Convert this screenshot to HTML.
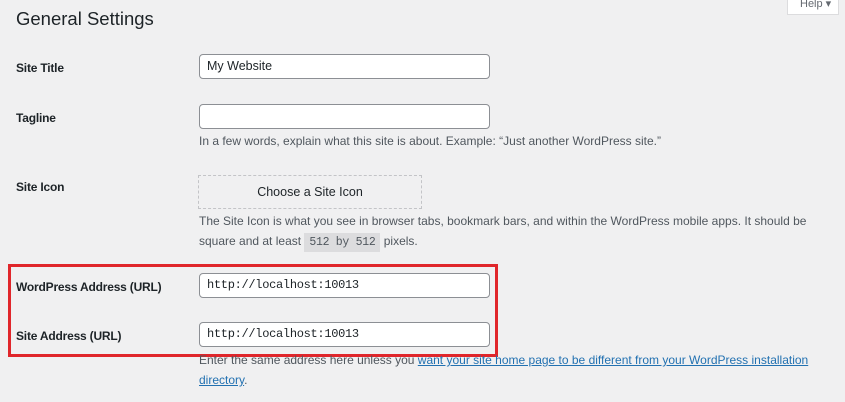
<!DOCTYPE html>
<html><head><style>
body{margin:0;width:845px;height:402px;background:#f0f0f1;font-family:"Liberation Sans",sans-serif;color:#1d2327;position:relative;overflow:hidden}
.a{position:absolute}
h1{position:absolute;left:16px;top:8px;margin:0;font-size:18.5px;font-weight:400}
.lbl{position:absolute;left:16px;font-size:12px;font-weight:bold;line-height:16px;letter-spacing:-0.2px}
.inp{position:absolute;left:199px;width:282px;height:23px;background:#fff;border:1px solid #8c8f94;border-radius:4px;font-size:12.5px;line-height:23px;padding-left:7px;box-sizing:content-box}
.mono{font-family:"Liberation Mono",monospace;font-size:12px;letter-spacing:-0.3px}
.d{position:absolute;left:199px;font-size:12px;color:#50575e;line-height:20px;width:640px}
code{background:#dcdcde;font-family:"Liberation Mono",monospace;font-size:11.5px;padding:3px 5px;letter-spacing:-0.3px}
a{color:#2271b1}
</style></head><body>
<div class="a" style="left:787px;top:-1px;width:52px;height:16px;background:#fff;border:1px solid #dcdcde;border-top:none;font-size:11px;color:#646970;line-height:11px;padding-left:12px;box-sizing:border-box">Help ▾</div>
<h1>General Settings</h1>
<div class="lbl" style="top:60px">Site Title</div>
<div class="inp" style="top:54px">My Website</div>
<div class="lbl" style="top:110px">Tagline</div>
<div class="inp" style="top:104px"></div>
<div class="d" style="top:131px">In a few words, explain what this site is about. Example: “Just another WordPress site.”</div>
<div class="lbl" style="top:179px">Site Icon</div>
<div class="a" style="left:198px;top:175px;width:222px;height:32px;border:1px dashed #c3c4c7;font-size:12.5px;text-align:center;line-height:32px">Choose a Site Icon</div>
<div class="d" style="top:211px">The Site Icon is what you see in browser tabs, bookmark bars, and within the WordPress mobile apps. It should be square and at least <code>512 by 512</code> pixels.</div>
<div class="a" style="left:8px;top:264px;width:484px;height:87px;border:3px solid #e0262b"></div>
<div class="lbl" style="top:279px">WordPress Address (URL)</div>
<div class="inp mono" style="top:273px">http://localhost:10013</div>
<div class="lbl" style="top:328px">Site Address (URL)</div>
<div class="inp mono" style="top:322px">http://localhost:10013</div>
<div class="d" style="top:350px">Enter the same address here unless you <a href="#">want your site home page to be different from your WordPress installation directory</a>.</div>
</body></html>
